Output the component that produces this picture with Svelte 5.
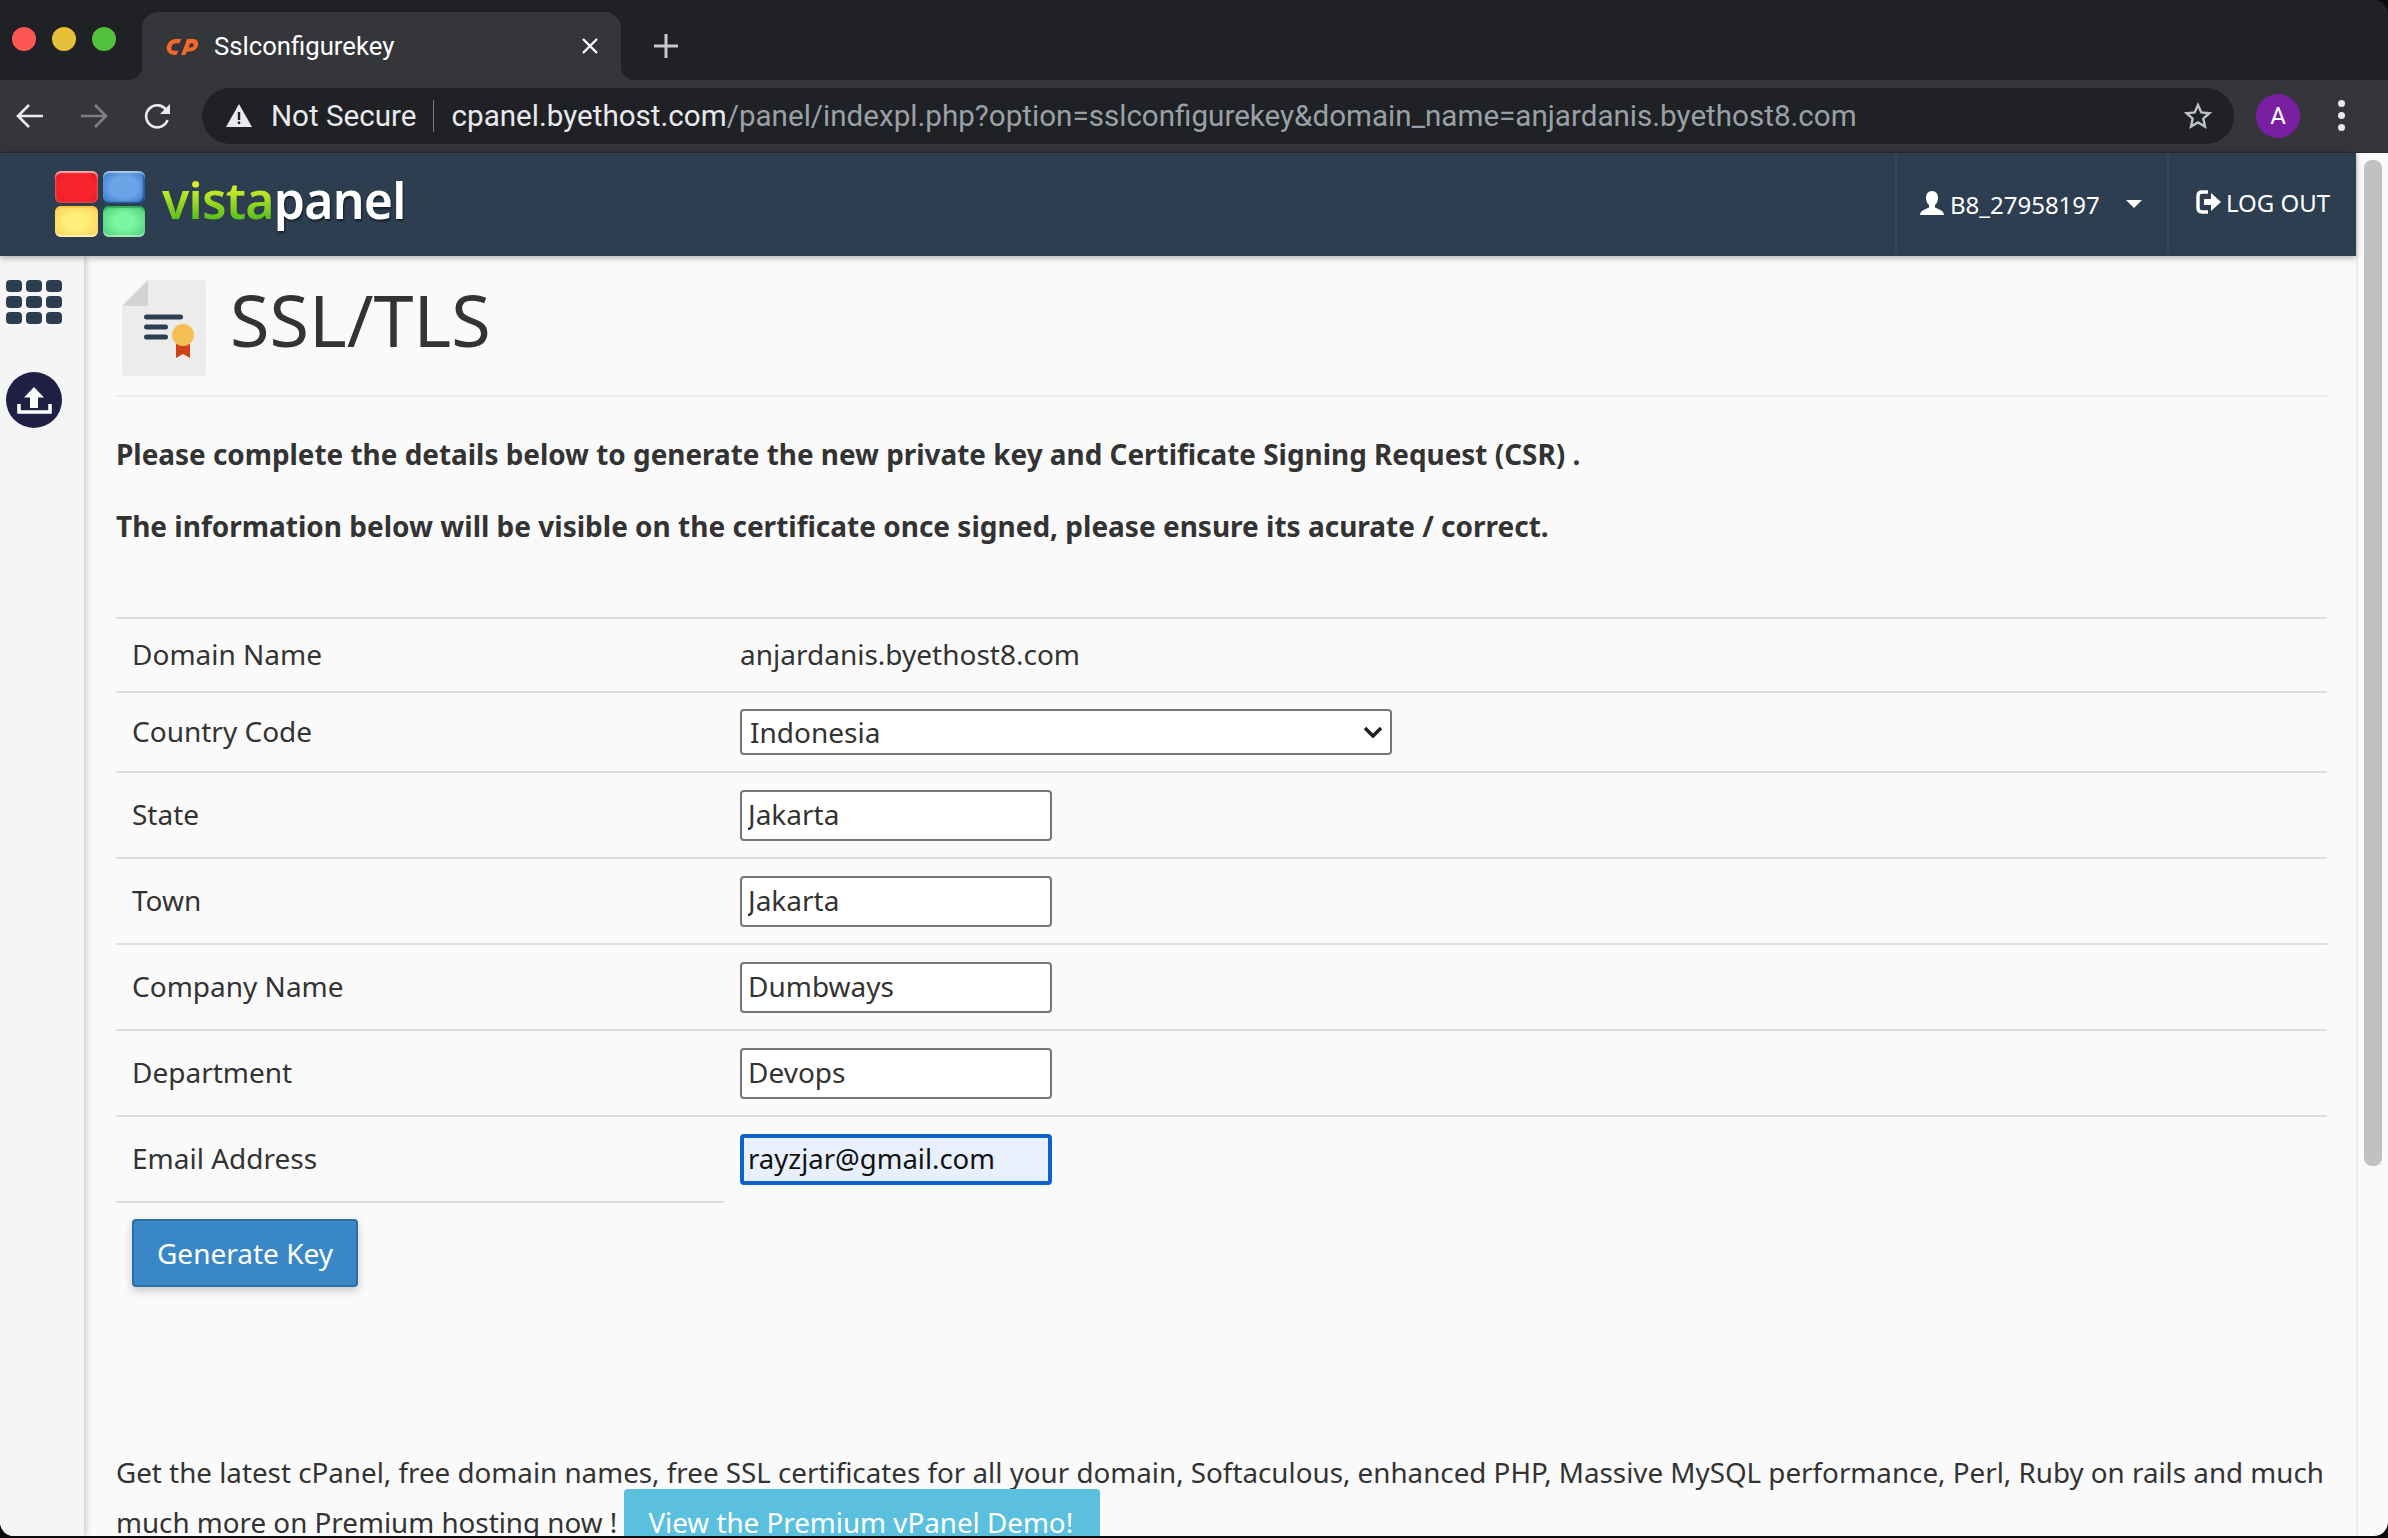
<script lang="ts">
  const rows = [
    { label: 'State', value: 'Jakarta' },
    { label: 'Town', value: 'Jakarta' },
    { label: 'Company Name', value: 'Dumbways' },
    { label: 'Department', value: 'Devops' },
  ]
</script>

<div class="window">
  <div class="tabstrip">
    <div class="lights">
      <span class="light red"></span>
      <span class="light yellow"></span>
      <span class="light green"></span>
    </div>
    <div class="tab">
      <svg class="favicon" viewBox="76 50 100 58" width="33" height="19">
        <path d="M122 56H105C90 56 80 68 78 80C76 95 88 105 102 105H108L113 92H102C94 92 90 88 92 80C94 73 99 69 106 69H117Z" fill="#f4692a" />
        <path d="M122 105L140 56H158C170 56 176 64 173 76C170 88 160 94 148 94H136L141 82H150C156 82 159 79 160 75C161 71 158 69 153 69H150L135 105Z" fill="#f4692a" />
      </svg>
      <span class="tab-title">Sslconfigurekey</span>
      <svg class="tab-close" viewBox="0 0 18 18" width="18" height="18">
        <path d="M2 2l14 14M16 2L2 16" stroke="#fff" stroke-width="2.400" />
      </svg>
    </div>
    <svg class="new-tab" viewBox="0 0 24 24" width="24" height="24">
      <path d="M12 0v24M0 12h24" stroke="#c8c9cb" stroke-width="3" />
    </svg>
  </div>

  <div class="toolbar">
    <svg class="nav-icon" viewBox="0 0 28 26" width="28" height="26">
      <path d="M27 13H3M13 2L2 13l11 11" fill="none" stroke="#e8eaed" stroke-width="2.600" />
    </svg>
    <svg class="nav-icon" viewBox="0 0 28 26" width="28" height="26">
      <path d="M1 13h24M15 2l11 11-11 11" fill="none" stroke="#7d7f82" stroke-width="2.600" />
    </svg>
    <svg class="nav-icon" viewBox="0 0 28 26" width="28" height="26">
      <path d="M23.500 17a11 11 0 1 1-1-9.500" fill="none" stroke="#e8eaed" stroke-width="2.600" />
      <path d="M26 1v10H16z" fill="#e8eaed" />
    </svg>
    <div class="omnibox">
      <svg class="warn" viewBox="0 0 26 23" width="26" height="23">
        <path d="M13 0L26 23H0z" fill="#e8eaed" />
        <path d="M11.800 8h2.400v8h-2.400zM11.800 17.500h2.400v2.500h-2.400z" fill="#202124" />
      </svg>
      <span class="secure">Not Secure</span>
      <span class="sep"></span>
      <span class="url"><b>cpanel.byethost.com</b>/panel/indexpl.php?option=sslconfigurekey&amp;domain_name=anjardanis.byethost8.com</span>
      <svg class="star" viewBox="0 0 28 27" width="28" height="27">
        <path d="M14 3l3.300 7.400 8 .8-6 5.400 1.700 7.900L14 20.500l-7 4 1.700-7.900-6-5.400 8-.8z" fill="none" stroke="#bdc1c6" stroke-width="2.400" />
      </svg>
    </div>
    <div class="avatar">A</div>
    <div class="dots"><span></span><span></span><span></span></div>
  </div>

  <div class="page">
    <div class="viewport">
      <header class="topbar">
        <div class="logo">
          <div class="squares">
            <span class="sq sq-red"></span>
            <span class="sq sq-blue"></span>
            <span class="sq sq-yellow"></span>
            <span class="sq sq-green"></span>
          </div>
          <div class="wordmark"><span class="vista">vista</span>panel</div>
        </div>
        <nav class="topnav">
          <div class="nav-item user">
            <svg viewBox="0 0 24 24" width="24" height="24">
              <path d="M12 0c4 0 6 3 6 7 0 3-1.200 5.500-3 7v2.500c2 1.500 9 2.500 9 7.500H0c0-5 7-6 9-7.500V14C7.200 12.500 6 10 6 7c0-4 2-7 6-7z" fill="#fff" />
            </svg>
            <span class="user-name">B8_27958197</span>
            <span class="caret"></span>
          </div>
          <div class="nav-item logout">
            <svg viewBox="0 0 26 24" width="26" height="24">
              <path d="M12 2H6C3 2 2 4 2 6v12c0 2 1 4 4 4h6" fill="none" stroke="#fff" stroke-width="3.400" />
              <path d="M8 9h7V3l10 9-10 9v-6H8z" fill="#fff" />
            </svg>
            <span>LOG OUT</span>
          </div>
        </nav>
      </header>

      <div class="body">
        <aside class="sidebar">
          <div class="apps">
            {#each Array(9) as _}
              <span></span>
            {/each}
          </div>
          <svg class="upload" viewBox="0 0 56 56" width="56" height="56">
            <circle cx="28" cy="28" r="28" fill="#1f2044" />
            <path d="M28 15l10 10.500h-6V36h-8V25.500h-6z" fill="#fff" />
            <path d="M13 32v8h31v-8" fill="none" stroke="#fff" stroke-width="3.500" />
          </svg>
        </aside>

        <main class="content">
          <div class="title-row">
            <svg class="doc" viewBox="0 0 84 96" width="84" height="96">
              <path d="M26 0h54a4 4 0 0 1 4 4v88a4 4 0 0 1-4 4H4a4 4 0 0 1-4-4V26z" fill="#ececec" />
              <path d="M26 0v26H0z" fill="#d3d3d3" />
              <rect x="22" y="34.500" width="39" height="5" rx="2.500" fill="#2c3e50" />
              <rect x="22" y="44.500" width="24" height="5" rx="2.500" fill="#2c3e50" />
              <rect x="22" y="54.500" width="24" height="5" rx="2.500" fill="#2c3e50" />
              <path d="M54 64h14v14l-7-4-7 4z" fill="#cf4213" />
              <circle cx="61" cy="55" r="11" fill="#f6bf55" />
            </svg>
            <h1>SSL/TLS</h1>
          </div>

          <p class="lead first">Please complete the details below to generate the new private key and Certificate Signing Request (CSR) .</p>
          <p class="lead">The information below will be visible on the certificate once signed, please ensure its acurate / correct.</p>

          <table>
            <tbody>
              <tr class="row-domain">
                <td class="name">Domain Name</td>
                <td class="domain-value">anjardanis.byethost8.com</td>
              </tr>
              <tr class="row-country">
                <td class="name">Country Code</td>
                <td>
                  <div class="select-wrap">
                    <select>
                      <option>Indonesia</option>
                    </select>
                    <svg class="chevron" viewBox="0 0 20 12" width="20" height="12">
                      <path d="M2 2l8 8 8-8" fill="none" stroke="#222" stroke-width="3.600" />
                    </svg>
                  </div>
                </td>
              </tr>
              {#each rows as row}
                <tr>
                  <td class="name">{row.label}</td>
                  <td><input type="text" value={row.value} /></td>
                </tr>
              {/each}
              <tr>
                <td class="name last">Email Address</td>
                <td class="no-line"><input class="focused" type="text" value="rayzjar@gmail.com" /></td>
              </tr>
            </tbody>
          </table>

          <button class="generate">Generate Key</button>

          <p class="promo">
            Get the latest cPanel, free domain names, free SSL certificates for all your domain, Softaculous, enhanced PHP, Massive MySQL performance, Perl, Ruby on rails and much
            much more on Premium hosting now ! <a class="demo" href="#demo">View the Premium vPanel Demo!</a>
          </p>
        </main>
      </div>
    </div>
    <div class="scrollbar"><div class="thumb"></div></div>
  </div>
</div>

<style>
  :global(body) {
    background: #0b0b0b;
    overflow: hidden;
  }

  .window {
    height: 1536px;
    display: flex;
    flex-direction: column;
    overflow: hidden;
    border-radius: 0 14px 14px 14px;
    font-family: 'Noto Sans', 'Open Sans', sans-serif;
  }

  /* browser chrome */
  .tabstrip {
    height: 80px;
    flex-shrink: 0;
    background: #202124;
    display: flex;
    align-items: flex-end;
  }
  .lights {
    display: flex;
    gap: 16px;
    padding: 0 26px 29px 12px;
  }
  .light {
    width: 24px;
    height: 24px;
    border-radius: 50%;
  }
  .red { background: #fc5753; }
  .yellow { background: #e6c03b; }
  .green { background: #52c03a; }

  .tab {
    position: relative;
    width: 479px;
    height: 68px;
    box-sizing: border-box;
    background: #35363a;
    border-radius: 16px 16px 0 0;
    display: flex;
    align-items: center;
    padding: 0 22px 0 24px;
    color: #fff;
  }
  .tab::before,
  .tab::after {
    content: '';
    position: absolute;
    bottom: 0;
    width: 14px;
    height: 14px;
  }
  .tab::before {
    left: -14px;
    background: radial-gradient(circle at 0 0, #202124 14px, #35363a 14.500px);
  }
  .tab::after {
    right: -14px;
    background: radial-gradient(circle at 100% 0, #202124 14px, #35363a 14.500px);
  }
  .favicon { flex-shrink: 0; }
  .tab-title {
    font-family: Roboto, sans-serif;
    font-size: 25.700px;
    margin-left: 15px;
    flex: 1;
  }
  .new-tab {
    margin: 0 0 22px 33px;
  }

  .toolbar {
    height: 73px;
    flex-shrink: 0;
    box-sizing: border-box;
    background: #35363a;
    border-bottom: 1px solid #2a2b2e;
    display: flex;
    align-items: center;
    padding: 0 0 1px 16px;
  }
  .nav-icon {
    margin-right: 36px;
    flex-shrink: 0;
  }
  .nav-icon:nth-child(3) {
    margin-right: 30px;
  }
  .omnibox {
    width: 2032px;
    height: 56px;
    box-sizing: border-box;
    background: #202124;
    border-radius: 28px;
    display: flex;
    align-items: center;
    padding: 0 22px 0 24px;
    font-family: Roboto, sans-serif;
    font-size: 29.600px;
    color: #9aa0a6;
    white-space: nowrap;
  }
  .secure {
    color: #e8eaed;
    margin-left: 19px;
  }
  .sep {
    width: 1px;
    height: 32px;
    background: #7b7d80;
    margin: 0 18px 0 16px;
  }
  .url {
    flex: 1;
  }
  .url b {
    font-weight: 400;
    color: #e8eaed;
  }
  .avatar {
    width: 44px;
    height: 44px;
    border-radius: 50%;
    background: #7b1fa2;
    color: #fff;
    font-family: Roboto, sans-serif;
    font-size: 24px;
    display: flex;
    align-items: center;
    justify-content: center;
    margin-left: 22px;
  }
  .dots {
    display: flex;
    flex-direction: column;
    gap: 5px;
    margin-left: 38px;
  }
  .dots span {
    width: 7px;
    height: 7px;
    border-radius: 50%;
    background: #e8eaed;
  }

  /* page */
  .page {
    flex: 1;
    min-height: 0;
    display: flex;
  }
  .viewport {
    width: 2356px;
    display: flex;
    flex-direction: column;
    background: #fafafa;
    color: #333;
  }
  .scrollbar {
    flex: 1;
    background: #fafafa;
    border-left: 2px solid #ececec;
    padding: 7px 6px 0 6px;
  }
  .thumb {
    height: 1006px;
    background: #c1c1c1;
    border-radius: 8px;
  }

  .topbar {
    position: relative;
    z-index: 2;
    height: 103px;
    flex-shrink: 0;
    background: #2c3e50;
    box-shadow: 0 2px 6px rgba(0, 0, 0, 0.3);
    display: flex;
    justify-content: space-between;
  }
  .logo {
    display: flex;
    align-items: center;
    padding: 0 0 0 55px;
    gap: 17px;
  }
  .squares {
    display: grid;
    grid-template-columns: 43px 42px;
    grid-template-rows: 32px 31px;
    gap: 3px 5px;
    margin-top: -2px;
  }
  .sq {
    border-radius: 6px;
  }
  .sq-red {
    background: radial-gradient(ellipse, #f8222a 55%, #d81c24);
    box-shadow: inset 0 2px 1px rgba(255, 255, 255, 0.55), inset 0 0 3px rgba(255, 160, 160, 0.7);
  }
  .sq-blue {
    background: radial-gradient(ellipse, #6aa5e8 45%, #4a86d0 80%, #1f5ca8);
    box-shadow: inset 0 2px 1px rgba(255, 255, 255, 0.5), inset -2px -1px 2px rgba(15, 70, 150, 0.8);
  }
  .sq-yellow {
    background: radial-gradient(ellipse, #ffee7a 35%, #fbd45a 90%);
    box-shadow: inset 0 -2px 1px rgba(255, 255, 255, 0.5), inset 0 2px 1px rgba(245, 190, 50, 0.7);
  }
  .sq-green {
    background: radial-gradient(ellipse, #7af5a0 35%, #4fd078 90%);
    box-shadow: inset 0 -2px 1px rgba(255, 255, 255, 0.45), inset 0 2px 1px rgba(40, 160, 80, 0.8);
  }
  .wordmark {
    font-family: 'Noto Sans', sans-serif;
    font-size: 50px;
    font-weight: 600;
    color: #fff;
    letter-spacing: -0.800px;
    margin-top: -10px;
    text-shadow: 1px 2px 2px rgba(0, 0, 0, 0.5);
  }
  .vista {
    background: linear-gradient(#d6ef2a 30%, #48b81a 85%);
    -webkit-background-clip: text;
    background-clip: text;
    color: transparent;
    text-shadow: none;
  }

  .topnav {
    display: flex;
  }
  .nav-item {
    display: flex;
    align-items: center;
    height: 100px;
    box-sizing: border-box;
    border-left: 2px solid #34475a;
    color: #fff;
    font-size: 24px;
  }
  .user {
    width: 272px;
    padding: 0 0 0 23px;
    gap: 6px;
  }
  .user-name {
    padding-top: 2px;
  }
  .caret {
    width: 0;
    height: 0;
    border-left: 8px solid transparent;
    border-right: 8px solid transparent;
    border-top: 8px solid #fff;
    margin: 2px 0 0 20px;
  }
  .logout {
    width: 189px;
    padding: 0 0 2px 27px;
    gap: 4px;
  }

  .body {
    flex: 1;
    min-height: 0;
    display: flex;
  }
  .sidebar {
    width: 84px;
    flex-shrink: 0;
    box-sizing: border-box;
    background: #f5f5f5;
    box-shadow: 2px 0 6px rgba(0, 0, 0, 0.2);
    padding: 24px 0 0 6px;
    display: flex;
    flex-direction: column;
    gap: 48px;
  }
  .apps {
    display: grid;
    grid-template-columns: repeat(3, 16px);
    grid-auto-rows: 12px;
    gap: 4px;
  }
  .apps span {
    background: #2c3e50;
    border-radius: 4px;
  }

  .content {
    flex: 1;
    min-width: 0;
    padding: 24px 29px 0 32px;
    font-size: 27.770px;
    overflow: hidden;
  }
  .title-row {
    display: flex;
    align-items: center;
    gap: 24px;
    padding: 0 0 19px 6px;
    border-bottom: 2px solid #eeeeee;
  }
  h1 {
    margin: 0;
    font-size: 72px;
    font-weight: 400;
    line-height: 1;
    color: #333;
    padding-bottom: 18px;
  }

  .lead {
    margin: 0;
    font-size: 28px;
    font-weight: 700;
    line-height: 36px;
    padding-top: 36px;
  }
  .lead.first {
    font-size: 27.900px;
    padding-top: 39px;
  }

  table {
    width: 100%;
    border-collapse: collapse;
    margin-top: 73px;
    font-size: 28px;
  }
  td {
    border-top: 2px solid #dddddd;
    padding: 0 16px;
    height: 82px;
    vertical-align: middle;
    line-height: 1;
  }
  .row-domain td { height: 70px; }
  .row-country td { height: 76px; }
  .name,
  .domain-value {
    padding-bottom: 2px;
  }
  .name { width: 576px; }
  .name.last { border-bottom: 2px solid #dddddd; }
  td input,
  td select {
    font-family: 'Noto Sans', 'Open Sans', sans-serif;
    font-size: 28px;
    color: #333;
    box-sizing: border-box;
    display: block;
    background: #fff;
    border: 2px solid #767676;
    border-radius: 4px;
  }
  .select-wrap {
    position: relative;
    width: 652px;
  }
  .chevron {
    position: absolute;
    right: 9px;
    top: 17px;
    pointer-events: none;
  }
  select {
    appearance: none;
    width: 652px;
    height: 46px;
    padding: 0 8px;
  }
  input {
    width: 312px;
    height: 51px;
    padding: 0 6px 2px;
  }
  td input.focused {
    background: #e8f0fe;
    border: 4px solid #0b63ce;
    padding: 0 4px 2px;
    color: #111;
    font-size: 27.500px;
  }

  .generate {
    display: block;
    margin: 16px 0 0 16px;
    width: 226px;
    height: 68px;
    background: #3a87c8;
    border: 2px solid #2e6da4;
    border-radius: 4px;
    color: #fff;
    font-family: 'Noto Sans', 'Open Sans', sans-serif;
    font-size: 28px;
    box-shadow: 0 4px 10px rgba(0, 0, 0, 0.2);
  }

  .promo {
    margin: 160px 0 0 0;
    line-height: 50px;
  }
  .demo {
    background: #5bc0de;
    color: #fff;
    text-decoration: none;
    padding: 14px 27px 14px 24px;
    border-radius: 4px;
  }
</style>
